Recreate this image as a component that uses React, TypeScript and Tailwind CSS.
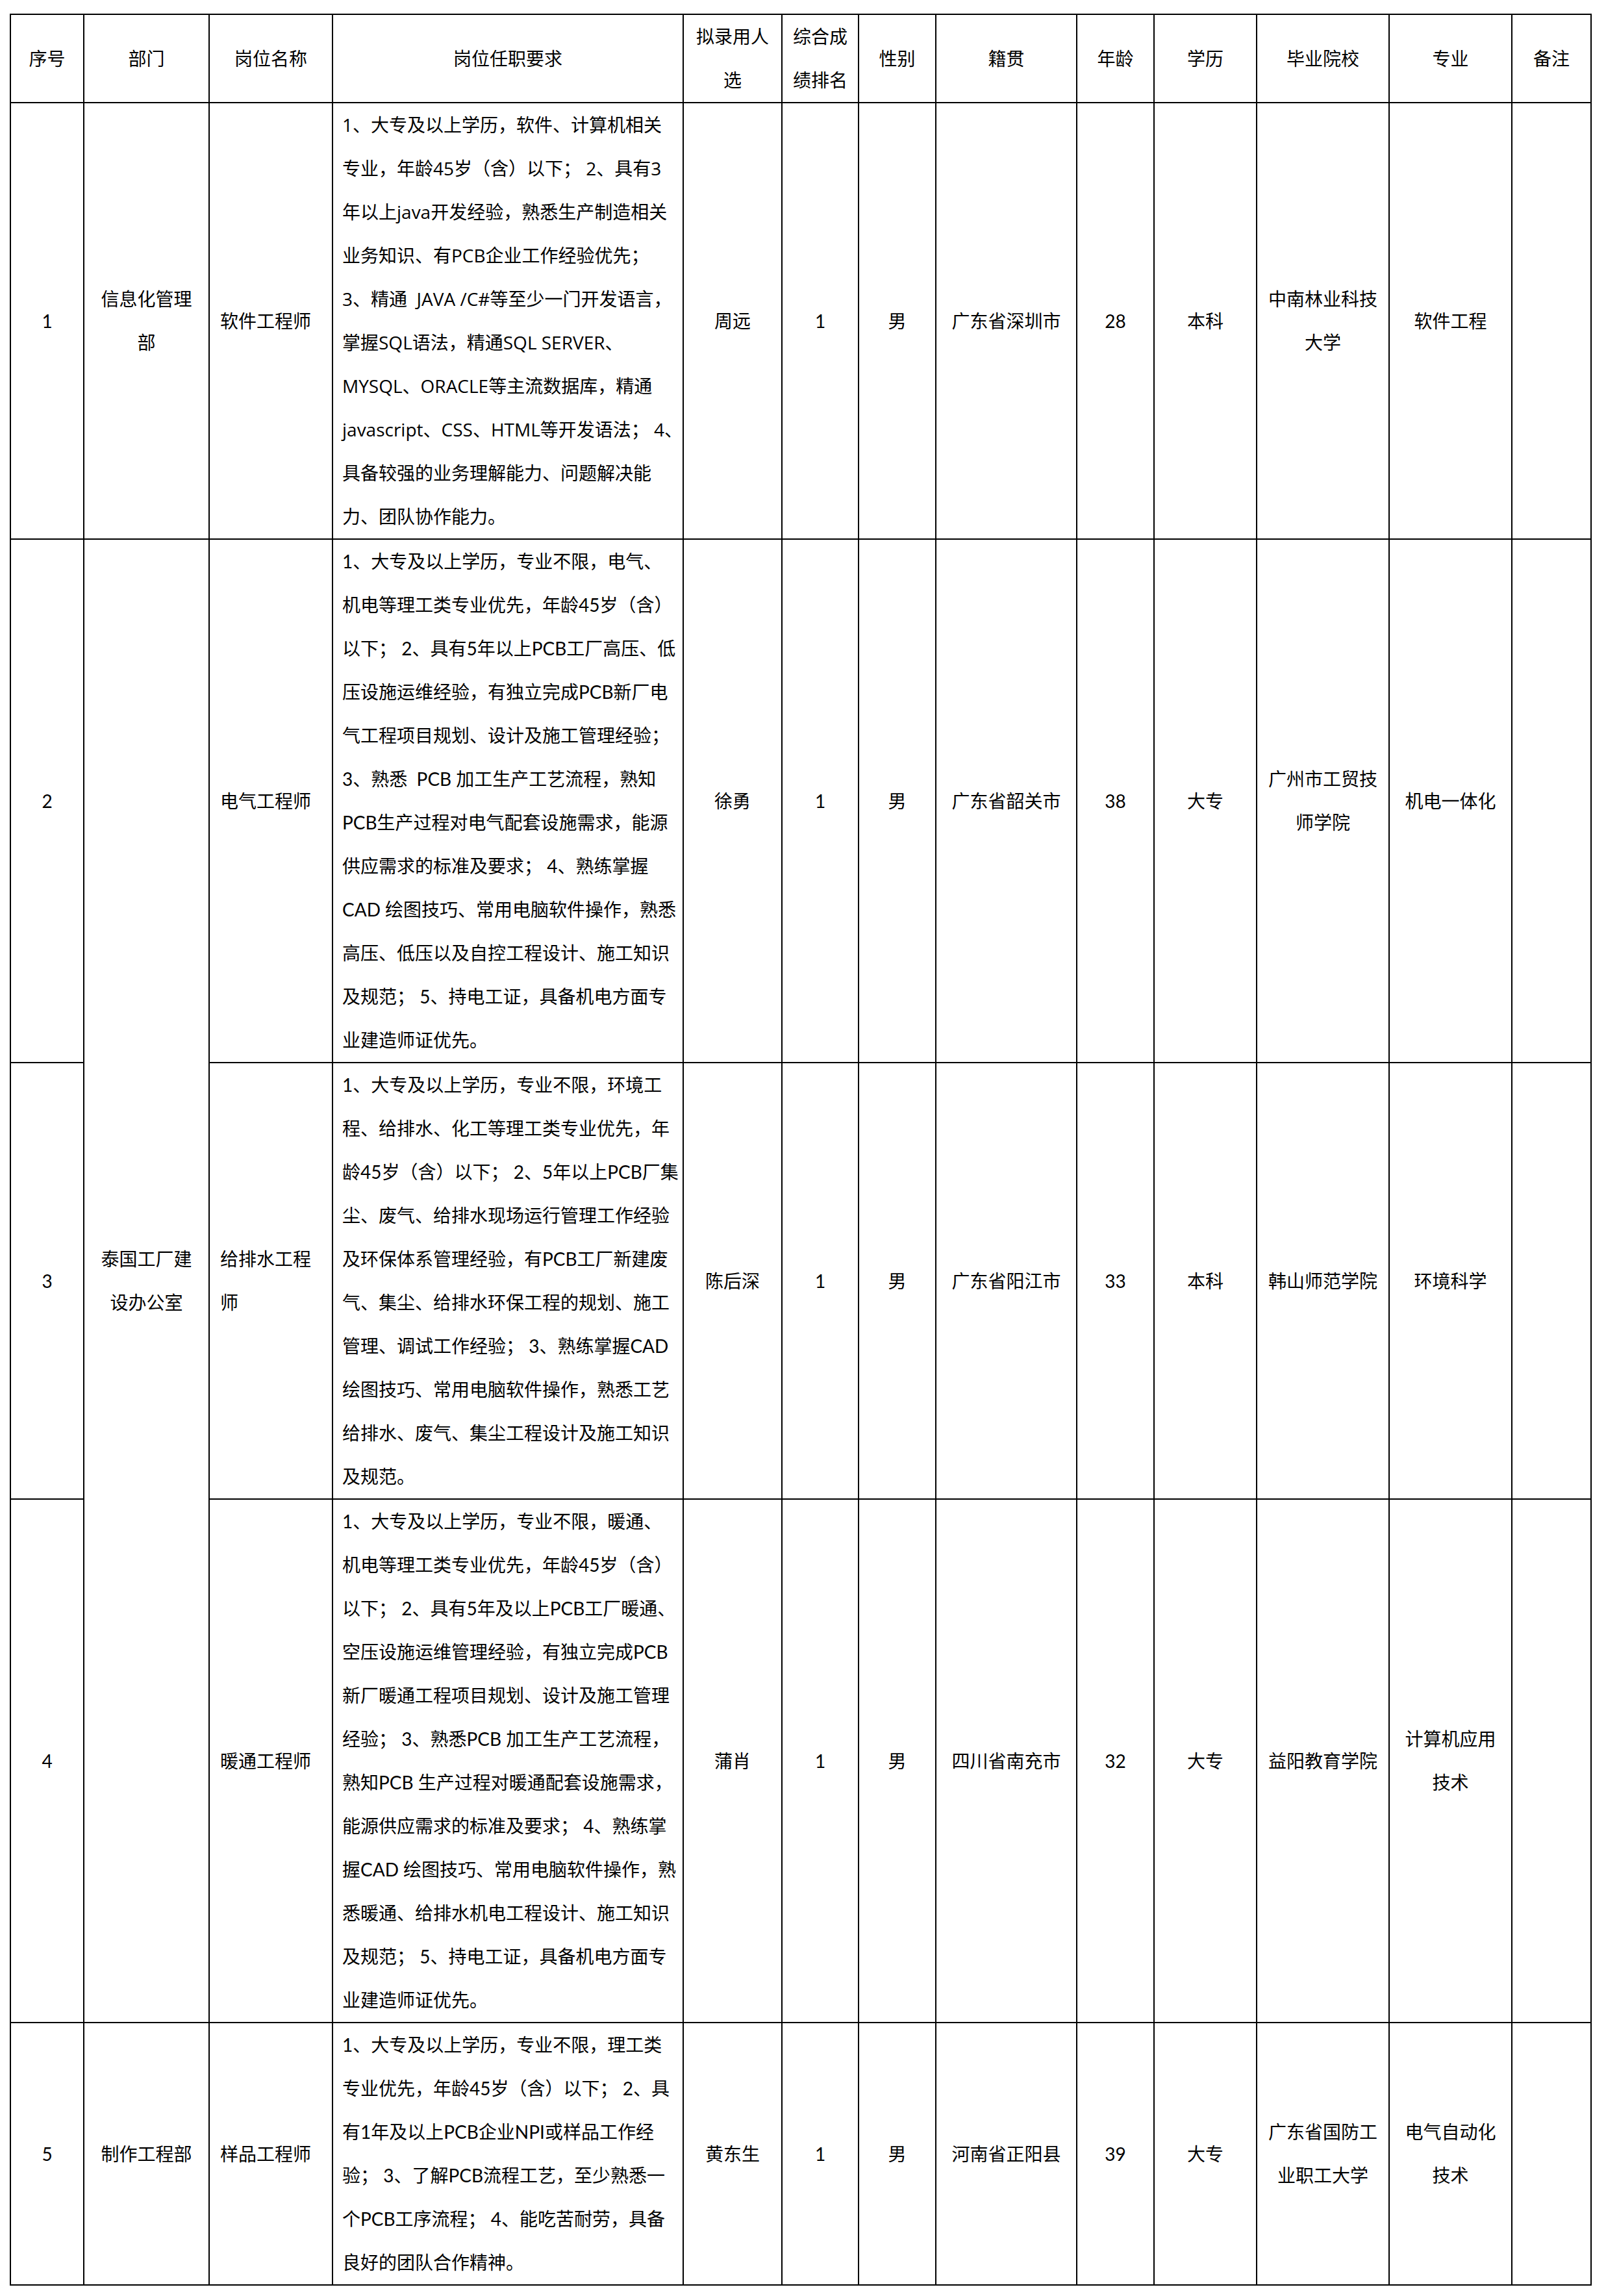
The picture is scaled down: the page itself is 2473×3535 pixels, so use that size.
import React from "react";

type Row = {
  no: string;
  dept?: string[];
  deptSpan?: number;
  pos: string[];
  req: string[];
  reqClass: string;
  name: string;
  rank: string;
  sex: string;
  origin: string;
  age: string;
  edu: string;
  school: string[];
  major: string[];
};

const rows: Row[] = [
  {
    no: "1",
    dept: ["信息化管理", "部"],
    deptSpan: 1,
    pos: ["软件工程师"],
    reqClass: "[font-family:'Open_Sans','Noto_Sans_CJK_SC',sans-serif]",
    req: [
      "1、大专及以上学历，软件、计算机相关",
      "专业，年龄45岁（含）以下； 2、具有3",
      "年以上java开发经验，熟悉生产制造相关",
      "业务知识、有PCB企业工作经验优先；",
      "3、精通  JAVA /C#等至少一门开发语言，",
      "掌握SQL语法，精通SQL SERVER、",
      "MYSQL、ORACLE等主流数据库，精通",
      "javascript、CSS、HTML等开发语法； 4、",
      "具备较强的业务理解能力、问题解决能",
      "力、团队协作能力。",
    ],
    name: "周远",
    rank: "1",
    sex: "男",
    origin: "广东省深圳市",
    age: "28",
    edu: "本科",
    school: ["中南林业科技", "大学"],
    major: ["软件工程"],
  },
  {
    no: "2",
    dept: ["泰国工厂建", "设办公室"],
    deptSpan: 3,
    pos: ["电气工程师"],
    reqClass: "",
    req: [
      "1、大专及以上学历，专业不限，电气、",
      "机电等理工类专业优先，年龄45岁（含）",
      "以下； 2、具有5年以上PCB工厂高压、低",
      "压设施运维经验，有独立完成PCB新厂电",
      "气工程项目规划、设计及施工管理经验；",
      "3、熟悉  PCB 加工生产工艺流程，熟知",
      "PCB生产过程对电气配套设施需求，能源",
      "供应需求的标准及要求； 4、熟练掌握",
      "CAD 绘图技巧、常用电脑软件操作，熟悉",
      "高压、低压以及自控工程设计、施工知识",
      "及规范； 5、持电工证，具备机电方面专",
      "业建造师证优先。",
    ],
    name: "徐勇",
    rank: "1",
    sex: "男",
    origin: "广东省韶关市",
    age: "38",
    edu: "大专",
    school: ["广州市工贸技", "师学院"],
    major: ["机电一体化"],
  },
  {
    no: "3",
    pos: ["给排水工程", "师"],
    reqClass: "",
    req: [
      "1、大专及以上学历，专业不限，环境工",
      "程、给排水、化工等理工类专业优先，年",
      "龄45岁（含）以下； 2、5年以上PCB厂集",
      "尘、废气、给排水现场运行管理工作经验",
      "及环保体系管理经验，有PCB工厂新建废",
      "气、集尘、给排水环保工程的规划、施工",
      "管理、调试工作经验； 3、熟练掌握CAD",
      "绘图技巧、常用电脑软件操作，熟悉工艺",
      "给排水、废气、集尘工程设计及施工知识",
      "及规范。",
    ],
    name: "陈后深",
    rank: "1",
    sex: "男",
    origin: "广东省阳江市",
    age: "33",
    edu: "本科",
    school: ["韩山师范学院"],
    major: ["环境科学"],
  },
  {
    no: "4",
    pos: ["暖通工程师"],
    reqClass: "",
    req: [
      "1、大专及以上学历，专业不限，暖通、",
      "机电等理工类专业优先，年龄45岁（含）",
      "以下； 2、具有5年及以上PCB工厂暖通、",
      "空压设施运维管理经验，有独立完成PCB",
      "新厂暖通工程项目规划、设计及施工管理",
      "经验； 3、熟悉PCB 加工生产工艺流程，",
      "熟知PCB 生产过程对暖通配套设施需求，",
      "能源供应需求的标准及要求； 4、熟练掌",
      "握CAD 绘图技巧、常用电脑软件操作，熟",
      "悉暖通、给排水机电工程设计、施工知识",
      "及规范； 5、持电工证，具备机电方面专",
      "业建造师证优先。",
    ],
    name: "蒲肖",
    rank: "1",
    sex: "男",
    origin: "四川省南充市",
    age: "32",
    edu: "大专",
    school: ["益阳教育学院"],
    major: ["计算机应用", "技术"],
  },
  {
    no: "5",
    dept: ["制作工程部"],
    deptSpan: 1,
    pos: ["样品工程师"],
    reqClass: "",
    req: [
      "1、大专及以上学历，专业不限，理工类",
      "专业优先，年龄45岁（含）以下； 2、具",
      "有1年及以上PCB企业NPI或样品工作经",
      "验； 3、了解PCB流程工艺，至少熟悉一",
      "个PCB工序流程； 4、能吃苦耐劳，具备",
      "良好的团队合作精神。",
    ],
    name: "黄东生",
    rank: "1",
    sex: "男",
    origin: "河南省正阳县",
    age: "39",
    edu: "大专",
    school: ["广东省国防工", "业职工大学"],
    major: ["电气自动化", "技术"],
  },
];

const cell = "border-2 border-black p-0 align-middle text-center";

function Lines({ lines }: { lines: string[] }) {
  return (
    <>
      {lines.map((l, i) => (
        <div key={i} className="whitespace-pre">
          {l}
        </div>
      ))}
    </>
  );
}

export default function App() {
  const headers: string[][] = [
    ["序号"],
    ["部门"],
    ["岗位名称"],
    ["岗位任职要求"],
    ["拟录用人", "选"],
    ["综合成", "绩排名"],
    ["性别"],
    ["籍贯"],
    ["年龄"],
    ["学历"],
    ["毕业院校"],
    ["专业"],
    ["备注"],
  ];
  return (
    <div className="min-h-[3535px] w-[2473px] bg-white pl-[15px] pt-[21px] text-black [font-family:'Lato','Noto_Sans_CJK_SC',sans-serif]">
      <table className="w-[2436px] table-fixed border-collapse border-2 border-black text-[28px] leading-[67px]">
        <colgroup>
          <col className="w-[113px]" />
          <col className="w-[193px]" />
          <col className="w-[190px]" />
          <col className="w-[540px]" />
          <col className="w-[152px]" />
          <col className="w-[118px]" />
          <col className="w-[119px]" />
          <col className="w-[217px]" />
          <col className="w-[119px]" />
          <col className="w-[158px]" />
          <col className="w-[204px]" />
          <col className="w-[189px]" />
          <col className="w-[122px]" />
        </colgroup>
        <thead>
          <tr>
            {headers.map((h, i) => (
              <th key={i} className={`${cell} font-normal`}>
                <Lines lines={h} />
              </th>
            ))}
          </tr>
        </thead>
        <tbody>
          {rows.map((r) => (
            <tr key={r.no}>
              <td className={cell}>{r.no}</td>
              {r.dept && (
                <td className={cell} rowSpan={r.deptSpan}>
                  <Lines lines={r.dept} />
                </td>
              )}
              <td className={`${cell} !text-left pl-[16px]`}>
                <Lines lines={r.pos} />
              </td>
              <td className={`${cell} !text-left pl-[14px] ${r.reqClass}`}>
                <Lines lines={r.req} />
              </td>
              <td className={cell}>{r.name}</td>
              <td className={cell}>{r.rank}</td>
              <td className={cell}>{r.sex}</td>
              <td className={cell}>{r.origin}</td>
              <td className={cell}>{r.age}</td>
              <td className={cell}>{r.edu}</td>
              <td className={cell}>
                <Lines lines={r.school} />
              </td>
              <td className={cell}>
                <Lines lines={r.major} />
              </td>
              <td className={cell}></td>
            </tr>
          ))}
        </tbody>
      </table>
    </div>
  );
}
